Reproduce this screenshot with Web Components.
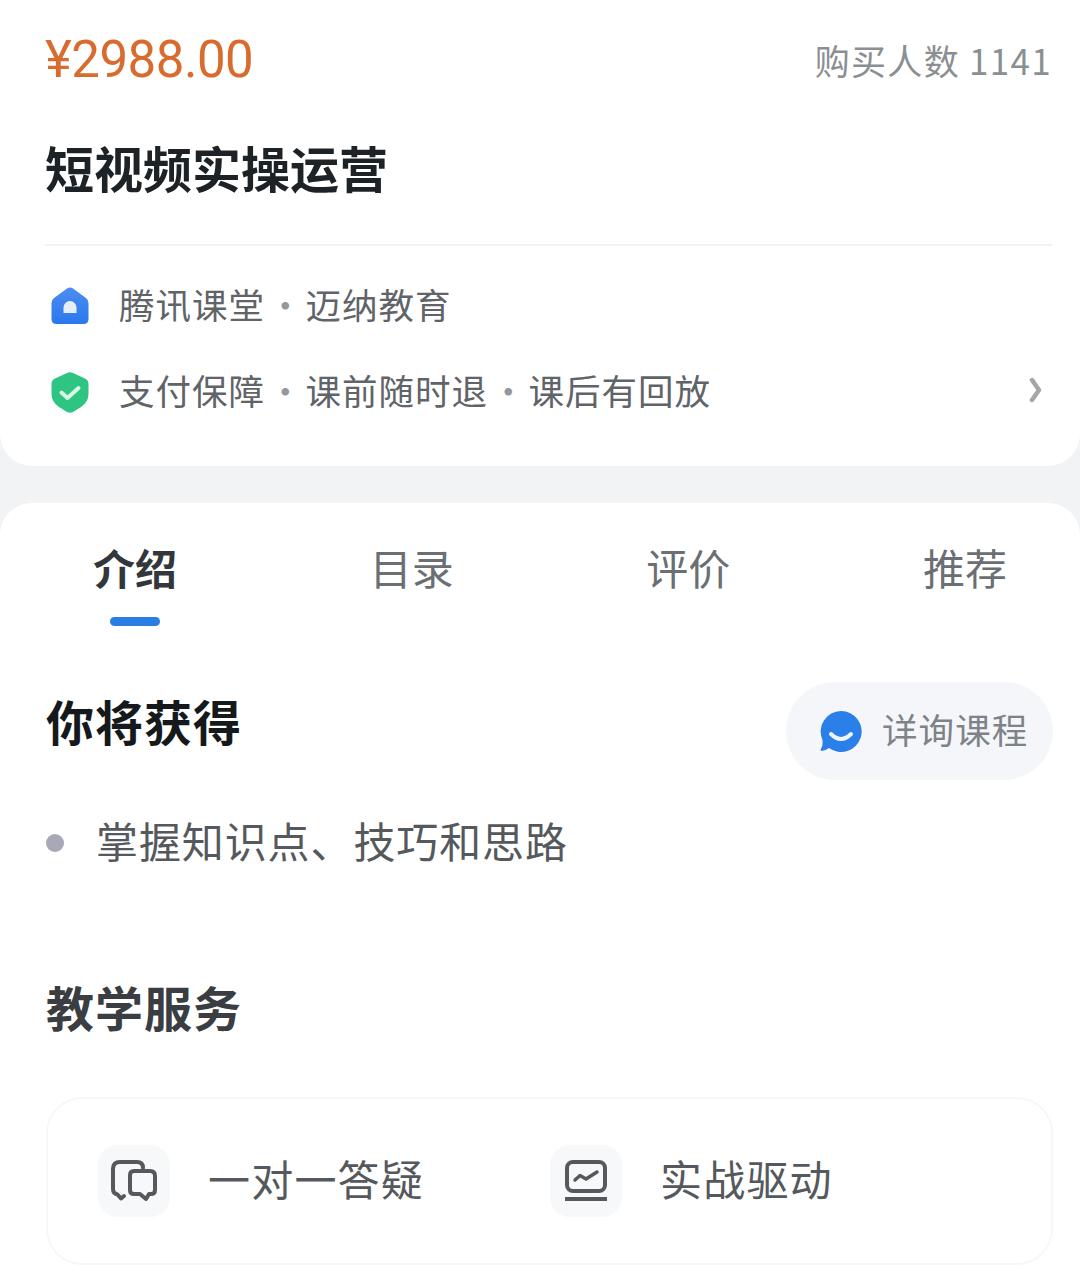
<!DOCTYPE html>
<html lang="zh">
<head>
<meta charset="utf-8">
<style>
  html, body { margin: 0; padding: 0; }
  body {
    width: 1080px;
    height: 1282px;
    overflow: hidden;
    background: #f2f3f5;
    font-family: "Noto Sans", "Noto Sans CJK SC", sans-serif;
  }
  info-row i {
    font-style: normal;
  }
</style>
</head>
<body>
<course-summary></course-summary>
<detail-panel></detail-panel>

<script>
// course-summary.js
class InfoRow extends HTMLElement {
  constructor() {
    super();
    this.attachShadow({ mode: 'open' });
    this.shadowRoot.innerHTML = `
      <style>
        :host {
          display:flex;
          align-items:center;
          height:86px;
          color:#5f6468;
          font-size:35.500px;
          font-family:"Noto Sans CJK SC", sans-serif;
          letter-spacing:1px;
        }
        .icon {
          width:40px;
          height:44px;
          margin-left:5px;
          margin-right:29px;
          display:flex;
        }
        .text {
          flex:1;
          white-space:nowrap;
          position:relative;
          top:-3px;
        }
        ::slotted(i) {
          display:inline-block;
          width:40.500px;
          text-align:center;
          font-style:normal;
          letter-spacing:0;
          color:#94989b;
        }
      </style>
      <span class="icon"><slot name="icon"></slot></span>
      <span class="text"><slot></slot></span>
      <slot name="end"></slot>
    `;
  }
}

class CourseSummary extends HTMLElement {
  constructor() {
    super();
    this.attachShadow({ mode: 'open' });
    this.shadowRoot.innerHTML = `
      <style>
        :host {
          display:block;
          height:466px;
          box-sizing:border-box;
          padding:0 28px 0 45px;
          background:#fff;
          border-radius:0 0 32px 32px;
        }
        .top {
          display:flex;
          justify-content:space-between;
          align-items:center;
          height:118px;
        }
        .price {
          color:#d96b2f;
          font-size:51px;
          letter-spacing:-.5px;
          font-family:Roboto, sans-serif;
        }
        .buyers {
          color:#8b8f92;
          font-size:35px;
          letter-spacing:1.300px;
          font-family:"Noto Sans CJK SC", sans-serif;
        }
        h1 {
          margin:0;
          height:126px;
          line-height:98px;
          color:#1c2226;
          font-size:49px;
          font-weight:700;
          font-family:"Noto Sans CJK SC", sans-serif;
          border-bottom:2px solid #f1f2f3;
        }
        .rows { padding-top:17px; }
        svg.chev { margin-right:9px; position:relative; top:-2px; }
      </style>
      <div class="top">
        <span class="price">¥2988.00</span>
        <span class="buyers">购买人数 1141</span>
      </div>
      <h1>短视频实操运营</h1>
      <div class="rows">
        <info-row>
          <svg slot="icon" width="40" height="44" viewBox="0 0 40 44">
            <defs><linearGradient id="b" x1="0" y1="0" x2="0" y2="1"><stop offset="0" stop-color="#4c8df0"/><stop offset="1" stop-color="#2a78ee"/></linearGradient></defs>
            <path d="M17 4.500Q20 2.500 23 4.500L36 14Q38.500 16 38.500 19V35Q38.500 40 33.500 40H6.500Q1.500 40 1.500 35V19Q1.500 16 4 14Z" fill="url(#b)"/>
            <path d="M13.500 29V23.500a6.500 6.500 0 0 1 13 0V29Z" fill="#e8eef8"/>
          </svg>
          腾讯课堂<i>·</i>迈纳教育
        </info-row>
        <info-row>
          <svg slot="icon" width="40" height="44" viewBox="0 0 40 44">
            <path d="M17 3Q20 1.500 23 3L35 8.500Q38.500 10 38.500 14V24Q38.500 32 31 37L23 42Q20 43.500 17 42L9 37Q1.500 32 1.500 24V14Q1.500 10 5 8.500Z" fill="#2ec481"/>
            <path d="M11.500 22.500L17.500 28L28.500 18" fill="none" stroke="#d8f5e6" stroke-width="4" stroke-linecap="round" stroke-linejoin="round"/>
          </svg>
          支付保障<i>·</i>课前随时退<i>·</i>课后有回放
          <svg class="chev" slot="end" width="14" height="26" viewBox="0 0 14 26">
            <path d="M3 3L10 13L3 23" fill="none" stroke="#a4a6a8" stroke-width="4.500" stroke-linecap="round" stroke-linejoin="round"/>
          </svg>
        </info-row>
      </div>
    `;
  }
}

class TabBar extends HTMLElement {
  constructor() {
    super();
    this.attachShadow({ mode: 'open' });
    this.shadowRoot.innerHTML = `
      <style>
        :host {
          display:flex;
          justify-content:space-between;
          height:124px;
          padding:0 73px 0 93px;
          font-size:42px;
          font-family:"Noto Sans CJK SC", sans-serif;
          color:#6a6f73;
        }
        .tab {
          position:relative;
          line-height:128px;
          height:124px;
        }
        .active {
          color:#33373b;
          font-weight:700;
        }
        .active::after {
          content:"";
          position:absolute;
          left:17px;
          bottom:1px;
          width:50px;
          height:9px;
          border-radius:5px;
          background:#2a7de1;
        }
      </style>
      <span class="tab active">介绍</span>
      <span class="tab">目录</span>
      <span class="tab">评价</span>
      <span class="tab">推荐</span>
    `;
  }
}

class ServiceItem extends HTMLElement {
  constructor() {
    super();
    this.attachShadow({ mode: 'open' });
    this.shadowRoot.innerHTML = `
      <style>
        :host {
          display:flex;
          align-items:center;
          gap:38px;
          font-size:42px;
          letter-spacing:1.200px;
          color:#55595d;
          font-family:"Noto Sans CJK SC", sans-serif;
        }
        .badge {
          width:72px;
          height:72px;
          border-radius:20px;
          background:#f6f8fa;
          display:flex;
          align-items:center;
          justify-content:center;
        }
        .label { position:relative; top:-4px; }
      </style>
      <span class="badge"><slot name="icon"></slot></span>
      <span class="label"><slot></slot></span>
    `;
  }
}

class DetailPanel extends HTMLElement {
  constructor() {
    super();
    this.attachShadow({ mode: 'open' });
    this.shadowRoot.innerHTML = `
      <style>
        :host {
          display:block;
          margin-top:37px;
          height:779px;
          box-sizing:border-box;
          background:#fff;
          border-radius:32px 32px 0 0;
          font-family:"Noto Sans CJK SC", sans-serif;
        }
        .body { padding:0 27px 0 46px; }
        .head {
          display:flex;
          justify-content:space-between;
          height:98px;
          margin-top:55px;
        }
        h2 {
          margin:0;
          font-size:48px;
          line-height:72px;
          font-weight:700;
          letter-spacing:1px;
          color:#16191c;
        }
        .head h2 { line-height:76px; }
        .ask {
          display:flex;
          align-items:center;
          gap:20px;
          box-sizing:border-box;
          width:267px;
          height:98px;
          padding-left:33px;
          border-radius:49px;
          background:#f4f6f9;
          color:#7d8388;
          font-size:35.500px;
          letter-spacing:1.100px;
        }
        .ask span { position:relative; top:-3px; margin-left:-1px; }
        .point {
          display:flex;
          align-items:center;
          gap:32px;
          margin-top:28px;
          height:70px;
          font-size:42px;
          color:#55595d;
          letter-spacing:.9px;
        }
        .point span:last-child { position:relative; top:-4px; }
        .dot {
          width:18px;
          height:18px;
          border-radius:50%;
          background:#a7a9b6;
        }
        h2.muted { color:#3a3d41; margin-top:92px; }
        .services {
          display:grid;
          grid-template-columns:452px 1fr;
          align-items:center;
          box-sizing:border-box;
          height:168px;
          margin-top:55px;
          padding-left:50px;
          border:2px solid #f6f7f8;
          border-radius:36px;
        }
      </style>
      <tab-bar></tab-bar>
      <div class="body">
        <div class="head">
          <h2>你将获得</h2>
          <div class="ask">
            <svg width="44" height="44" viewBox="0 0 44 44">
              <path d="M22 2A20.500 20.500 0 1 1 10 39Q6 42 2.500 42Q1 41.500 2 40Q4 37.500 3.500 31A20.500 20.500 0 0 1 22 2Z" fill="#2a7fe8"/>
              <path d="M12 25Q22 35 32 25" fill="none" stroke="#eef5fd" stroke-width="4" stroke-linecap="round"/>
            </svg>
            <span>详询课程</span>
          </div>
        </div>
        <div class="point"><span class="dot"></span><span>掌握知识点、技巧和思路</span></div>
        <h2 class="muted">教学服务</h2>
        <div class="services">
          <service-item>
            <svg slot="icon" width="48" height="44" viewBox="0 0 48 44">
              <path d="M14 37L11 39.500L7.500 35.500Q3 34.500 3 30V10Q3 3 10 3H27Q33 3 33 9" fill="none" stroke="#55595d" stroke-width="4" stroke-linecap="round" stroke-linejoin="round"/>
              <path d="M24 12H40Q45 12 45 17V31Q45 35 41 35H39L36 40L30 35H24Q20 35 20 31V16Q20 12 24 12Z" fill="none" stroke="#55595d" stroke-width="4" stroke-linejoin="round"/>
            </svg>
            一对一答疑
          </service-item>
          <service-item>
            <svg slot="icon" width="42" height="42" viewBox="0 0 42 42">
              <rect x="2" y="2" width="38" height="29" rx="6" fill="none" stroke="#55595d" stroke-width="4"/>
              <path d="M10 20L15 15.500L21 19L32 12" fill="none" stroke="#55595d" stroke-width="3.500" stroke-linecap="round" stroke-linejoin="round"/>
              <rect x="0" y="37" width="42" height="4" fill="#55595d"/>
            </svg>
            实战驱动
          </service-item>
        </div>
      </div>
    `;
  }
}

customElements.define('info-row', InfoRow);
customElements.define('course-summary', CourseSummary);
customElements.define('tab-bar', TabBar);
customElements.define('service-item', ServiceItem);
customElements.define('detail-panel', DetailPanel);
</script>
</body>
</html>
